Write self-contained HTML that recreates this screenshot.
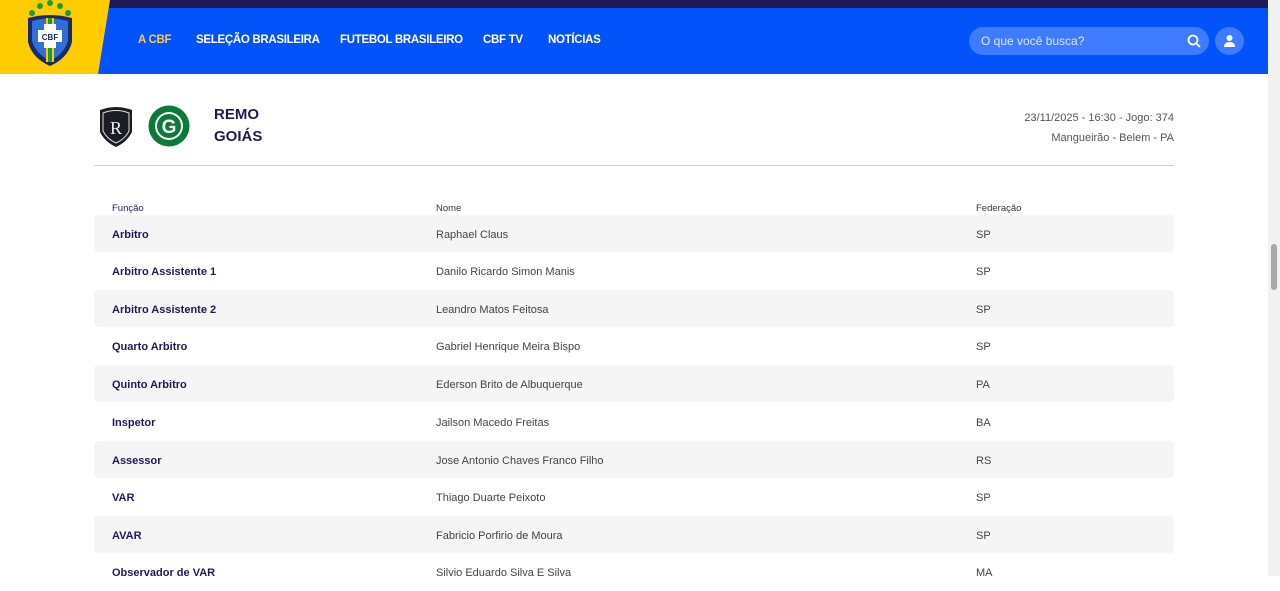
<!DOCTYPE html>
<html><head><meta charset="utf-8"><style>
*{margin:0;padding:0;box-sizing:border-box}
body{width:1280px;height:576px;overflow:hidden;background:#fff;font-family:"Liberation Sans",sans-serif;position:relative}
.top{position:absolute;left:0;top:0;width:1268px;height:8px;background:#1f1a55}
.nav{position:absolute;left:0;top:8px;width:1268px;height:66px;background:#0353fb}
.yel{position:absolute;left:0;top:0;width:110px;height:74px;background:#ffcc00;clip-path:polygon(0 0,110px 0,98px 74px,0 74px)}
.m{position:absolute;top:34px;color:#fff;font-weight:bold;font-size:11.5px;white-space:nowrap;letter-spacing:-0.3px}
.search{position:absolute;left:969px;top:27px;width:240px;height:28px;border-radius:14px;background:#3f7bff;color:#dce6ff;font-size:12px;padding:7px 12px}
.user{position:absolute;left:1215px;top:27px;width:29px;height:28px;border-radius:50%;background:#3f7bff}
.sb{position:absolute;left:1268px;top:0;width:12px;height:576px;background:#f1f1f1}
.sb div{position:absolute;left:3px;top:244px;width:6px;height:46px;background:#a8a8a8;border-radius:3px}
.teams{position:absolute;left:214px;top:104px;color:#1f1a55;font-weight:bold;font-size:15px;line-height:22px}
.info{position:absolute;right:106px;top:108px;text-align:right;color:#555;font-size:11px;line-height:20px}
.hr{position:absolute;left:94px;top:165px;width:1080px;height:1px;background:#ccc}
.row{position:absolute;left:94px;width:1080px;height:37px;font-size:11px;color:#444}
.row.g{background:#f5f5f5;border-radius:4px}
.row span{position:absolute;top:13px}
.row .a{left:18px;color:#1f1a55;font-weight:bold}
.row .b{left:342px}.row .c{left:882px}
.hd span{font-size:9.5px;color:#333;font-weight:normal!important}
</style></head><body>
<div class="top"></div><div class="nav"></div>
<div class="yel"></div>
<svg style="position:absolute;left:24px;top:0" width="52" height="68" viewBox="0 0 52 68">
<g fill="#1a9b3b"><circle cx="8" cy="13" r="3"/><circle cx="16" cy="6" r="3"/><circle cx="26" cy="3" r="3"/><circle cx="36" cy="6" r="3"/><circle cx="44" cy="13" r="3"/></g>
<path d="M4 18 Q26 12 48 18 L48 42 Q44 58 26 66 Q8 58 4 42Z" fill="#1b2a6b"/>
<path d="M8 21 Q26 16 44 21 L44 41 Q40 54 26 61 Q12 54 8 41Z" fill="#2f6fd6"/>
<rect x="22" y="18" width="8" height="44" fill="#ffcc00"/><rect x="24" y="18" width="4" height="44" fill="#1a9b3b"/>
<rect x="14" y="30" width="24" height="12" fill="#fff"/><rect x="20" y="24" width="12" height="24" fill="#fff"/>
<text x="26" y="40" font-size="8" font-weight="bold" text-anchor="middle" fill="#1b2a6b" font-family="Liberation Sans">CBF</text>
</svg>
<div class="m" style="left:138px;color:#ffc84a">A CBF</div>
<div class="m" style="left:196px">SELEÇÃO BRASILEIRA</div>
<div class="m" style="left:340px">FUTEBOL BRASILEIRO</div>
<div class="m" style="left:483px">CBF TV</div>
<div class="m" style="left:548px">NOTÍCIAS</div>
<div class="search">O que você busca?
<svg style="position:absolute;right:8px;top:7px" width="14" height="14" viewBox="0 0 14 14"><circle cx="6" cy="6" r="4.5" stroke="#fff" stroke-width="1.8" fill="none"/><path d="M9.5 9.5L13 13" stroke="#fff" stroke-width="1.8"/></svg></div>
<div class="user"><svg style="position:absolute;left:8px;top:7px" width="13" height="14" viewBox="0 0 13 14"><circle cx="6.5" cy="4" r="3" fill="#fff"/><path d="M1 13 Q1 8 6.5 8 Q12 8 12 13Z" fill="#fff"/></svg></div>
<div class="sb"><div></div></div>
<svg style="position:absolute;left:97px;top:104px" width="38" height="44" viewBox="0 0 38 44"><path d="M3 6 Q19 0 35 6 L35 28 Q30 38 19 43 Q8 38 3 28Z" fill="#1c1c24"/><path d="M6 9 Q19 4 32 9 L32 27 Q28 35 19 39 Q10 35 6 27Z" fill="none" stroke="#ddd" stroke-width="1"/><text x="19" y="30" font-size="18" fill="#eee" text-anchor="middle" font-family="Liberation Serif">R</text></svg>
<svg style="position:absolute;left:148px;top:105px" width="42" height="42" viewBox="0 0 42 42"><circle cx="21" cy="21" r="20.5" fill="#0b7a3b"/><circle cx="21" cy="21" r="14" fill="#fff"/><circle cx="21" cy="21" r="12" fill="#0b7a3b"/><text x="21" y="28" font-size="19" font-weight="bold" fill="#fff" text-anchor="middle" font-family="Liberation Sans">G</text></svg>
<div class="teams">REMO<br>GOIÁS</div>
<div class="info">23/11/2025 - 16:30 - Jogo: 374<br>Mangueirão - Belem - PA</div>
<div class="hr"></div>
<div class="row hd" style="top:190px"><span class="a">Função</span><span class="b">Nome</span><span class="c">Federação</span></div>
<div class="row g" style="top:215px"><span class="a" style="top:14px">Arbitro</span><span class="b" style="top:14px">Raphael Claus</span><span class="c" style="top:14px">SP</span></div>
<div class="row" style="top:253px"><span class="a">Arbitro Assistente 1</span><span class="b">Danilo Ricardo Simon Manis</span><span class="c">SP</span></div>
<div class="row g" style="top:290px"><span class="a" style="top:14px">Arbitro Assistente 2</span><span class="b" style="top:14px">Leandro Matos Feitosa</span><span class="c" style="top:14px">SP</span></div>
<div class="row" style="top:328px"><span class="a">Quarto Arbitro</span><span class="b">Gabriel Henrique Meira Bispo</span><span class="c">SP</span></div>
<div class="row g" style="top:365px"><span class="a" style="top:14px">Quinto Arbitro</span><span class="b" style="top:14px">Ederson Brito de Albuquerque</span><span class="c" style="top:14px">PA</span></div>
<div class="row" style="top:404px"><span class="a">Inspetor</span><span class="b">Jailson Macedo Freitas</span><span class="c">BA</span></div>
<div class="row g" style="top:441px"><span class="a" style="top:14px">Assessor</span><span class="b" style="top:14px">Jose Antonio Chaves Franco Filho</span><span class="c" style="top:14px">RS</span></div>
<div class="row" style="top:479px"><span class="a">VAR</span><span class="b">Thiago Duarte Peixoto</span><span class="c">SP</span></div>
<div class="row g" style="top:516px"><span class="a" style="top:14px">AVAR</span><span class="b" style="top:14px">Fabricio Porfirio de Moura</span><span class="c" style="top:14px">SP</span></div>
<div class="row" style="top:554px"><span class="a">Observador de VAR</span><span class="b">Silvio Eduardo Silva E Silva</span><span class="c">MA</span></div>
</body></html>
